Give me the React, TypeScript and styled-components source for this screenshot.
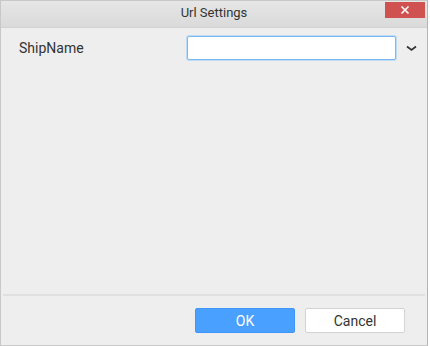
import React from "react";
import styled, { createGlobalStyle } from "styled-components";

const Global = createGlobalStyle`
  html, body {
    margin: 0;
    padding: 0;
    background: #ffffff;
  }
  body {
    font-family: Roboto, "Liberation Sans", sans-serif;
  }
`;

const Dialog = styled.div`
  width: 428px;
  height: 346px;
  box-sizing: border-box;
  border: 1px solid #c8c8c8;
  border-right-color: #b4b4b4;
  background: #eeeeee;
  display: flex;
  flex-direction: column;
`;

const TitleBar = styled.div`
  height: 27px;
  flex: none;
  position: relative;
  display: flex;
  align-items: center;
  justify-content: center;
  padding-bottom: 3px;
  box-sizing: border-box;
  background: linear-gradient(#e6e6e6, #dadada);
  border-bottom: 1px solid #d2d2d2;
  color: #333333;
  font-size: 13px;
`;

const CloseButton = styled.button`
  position: absolute;
  top: 1px;
  right: 2px;
  width: 40px;
  height: 16px;
  border: none;
  padding: 0;
  background: #cf5150;
  display: flex;
  align-items: center;
  justify-content: center;
`;

const Body = styled.div`
  flex: 1;
  padding: 8px 0 0 18px;
`;

const FieldRow = styled.div`
  display: flex;
  align-items: center;
  height: 24px;
`;

const Label = styled.span`
  width: 168px;
  font-size: 14px;
  color: #333333;
`;

const Input = styled.input`
  width: 209px;
  height: 24px;
  box-sizing: border-box;
  border: 1px solid #7fb8ee;
  box-shadow: 0 0 0 1px #bcdcf8;
  border-radius: 2px;
  background: #ffffff;
  outline: none;
  padding: 0 6px;
  font-size: 13px;
`;

const Chevron = styled.span`
  margin-left: 10px;
  display: flex;
  align-items: center;
`;

const Footer = styled.div`
  flex: none;
  height: 51px;
  margin: 0 2px;
  border-top: 2px solid #e0e0e0;
  display: flex;
  align-items: flex-start;
  justify-content: flex-end;
  gap: 10px;
  padding: 12px 20px 0 0;
  box-sizing: border-box;
`;

const Button = styled.button<{ $primary?: boolean }>`
  width: 100px;
  height: 25px;
  box-sizing: border-box;
  border-radius: 2px;
  font-family: Roboto, "Liberation Sans", sans-serif;
  font-size: 14px;
  border: 1px solid ${(p) => (p.$primary ? "#3d97fa" : "#d4d4d4")};
  background: ${(p) => (p.$primary ? "#4aa0ff" : "#ffffff")};
  color: ${(p) => (p.$primary ? "#ffffff" : "#333333")};
`;

export default function App() {
  return (
    <>
      <Global />
      <Dialog>
        <TitleBar>
          Url Settings
          <CloseButton>
            <svg width="10" height="10" viewBox="0 0 10 10">
              <path d="M1.5 1.5 L8.5 8.5 M8.5 1.5 L1.5 8.5" stroke="#fff" strokeWidth="1.6" />
            </svg>
          </CloseButton>
        </TitleBar>
        <Body>
          <FieldRow>
            <Label>ShipName</Label>
            <Input />
            <Chevron>
              <svg width="11" height="7" viewBox="0 0 11 7">
                <path d="M1 1.5 L5.5 5 L10 1.5" stroke="#333" strokeWidth="1.7" fill="none" />
              </svg>
            </Chevron>
          </FieldRow>
        </Body>
        <Footer>
          <Button $primary>OK</Button>
          <Button>Cancel</Button>
        </Footer>
      </Dialog>
    </>
  );
}
